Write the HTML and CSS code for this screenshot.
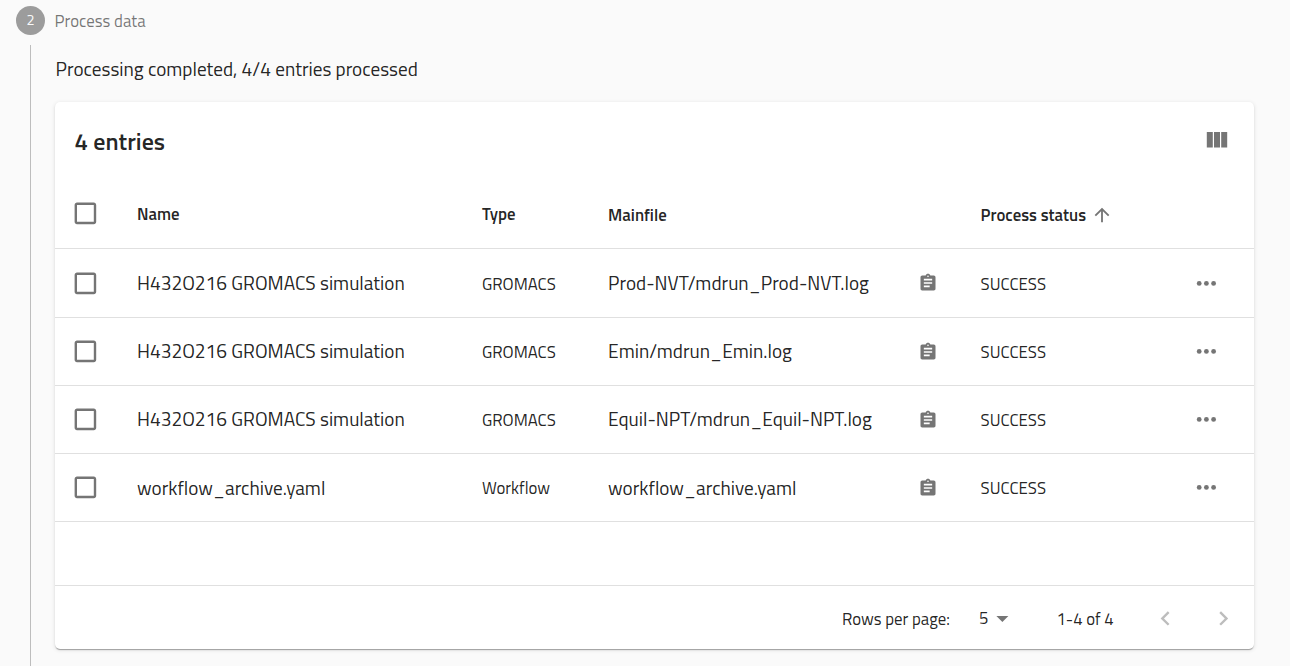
FILE: index.html
```
<!DOCTYPE html>
<html lang="en">
<head>
<meta charset="utf-8">
<title>Process data</title>
<link rel="stylesheet" href="styles.css">
</head>
<body>
<svg class="defs" aria-hidden="true">
  <symbol id="box" viewBox="0 0 24 24"><path d="M19 5v14H5V5h14m0-2H5c-1.1 0-2 .9-2 2v14c0 1.100.9 2 2 2h14c1.100 0 2-.9 2-2V5c0-1.100-.9-2-2-2z"/></symbol>
  <symbol id="columns" viewBox="0 0 24 24"><path d="M10 18h5V5h-5v13zm-6 0h5V5H4v13zM16 5v13h5V5h-5z"/></symbol>
  <symbol id="arrow" viewBox="0 0 24 24"><path d="M4 12l1.410 1.410L11 7.830V20h2V7.830l5.580 5.590L20 12l-8-8-8 8z"/></symbol>
  <symbol id="clip" viewBox="0 0 24 24"><path d="M19 3h-4.180C14.400 1.840 13.300 1 12 1c-1.300 0-2.400.84-2.820 2H5c-1.100 0-2 .9-2 2v14c0 1.100.9 2 2 2h14c1.100 0 2-.9 2-2V5c0-1.100-.9-2-2-2zm-7 0c.55 0 1 .45 1 1s-.45 1-1 1-1-.45-1-1 .45-1 1-1zm2 14H7v-2h7v2zm3-4H7v-2h10v2zm0-4H7V7h10v2z"/></symbol>
  <symbol id="more" viewBox="0 0 24 24"><circle cx="6" cy="12" r="2"/><circle cx="12" cy="12" r="2"/><circle cx="18" cy="12" r="2"/></symbol>
  <symbol id="drop" viewBox="0 0 24 24"><path d="M7 10l5 5 5-5z"/></symbol>
  <symbol id="prev" viewBox="0 0 24 24"><path d="M15.410 7.410L14 6l-6 6 6 6 1.410-1.410L10.830 12z"/></symbol>
  <symbol id="next" viewBox="0 0 24 24"><path d="M10 6L8.590 7.410 13.170 12l-4.580 4.590L10 18l6-6z"/></symbol>
</svg>
<div class="step">
  <span class="step-icon">2</span>
  <span class="step-label">Process data</span>
</div>
<div class="step-content">
  <p class="message">Processing completed, 4/4 entries processed</p>
  <section class="card">
    <header class="toolbar">
      <h1 class="title">4 entries</h1>
      <svg class="icon"><use href="#columns"/></svg>
    </header>
    <div class="row head">
      <svg class="icon"><use href="#box"/></svg>
      <span>Name</span>
      <span>Type</span>
      <span class="low">Mainfile</span>
      <span></span>
      <span class="sort"><span class="low">Process status</span><svg class="icon-sort"><use href="#arrow"/></svg></span>
    </div>
    <div class="row">
      <svg class="icon"><use href="#box"/></svg>
      <span class="large">H432O216 GROMACS simulation</span>
      <span class="low">GROMACS</span>
      <span class="large">Prod-NVT/mdrun_Prod-NVT.log</span>
      <svg class="icon-clip"><use href="#clip"/></svg>
      <span class="low">SUCCESS</span>
      <svg class="icon"><use href="#more"/></svg>
    </div>
    <div class="row">
      <svg class="icon"><use href="#box"/></svg>
      <span class="large high">H432O216 GROMACS simulation</span>
      <span>GROMACS</span>
      <span class="large high">Emin/mdrun_Emin.log</span>
      <svg class="icon-clip"><use href="#clip"/></svg>
      <span>SUCCESS</span>
      <svg class="icon"><use href="#more"/></svg>
    </div>
    <div class="row">
      <svg class="icon"><use href="#box"/></svg>
      <span class="large high">H432O216 GROMACS simulation</span>
      <span>GROMACS</span>
      <span class="large high">Equil-NPT/mdrun_Equil-NPT.log</span>
      <svg class="icon-clip"><use href="#clip"/></svg>
      <span>SUCCESS</span>
      <svg class="icon"><use href="#more"/></svg>
    </div>
    <div class="row">
      <svg class="icon"><use href="#box"/></svg>
      <span class="large">workflow_archive.yaml</span>
      <span>Workflow</span>
      <span class="large">workflow_archive.yaml</span>
      <svg class="icon-clip"><use href="#clip"/></svg>
      <span>SUCCESS</span>
      <svg class="icon"><use href="#more"/></svg>
    </div>
    <div class="blank"></div>
    <footer class="pager">
      <span class="per-page low">Rows per page:</span>
      <span class="select">5<svg class="icon"><use href="#drop"/></svg></span>
      <span class="range low">1-4 of 4</span>
      <svg class="icon off"><use href="#prev"/></svg>
      <svg class="icon off"><use href="#next"/></svg>
    </footer>
  </section>
</div>
</body>
</html>
```

FILE: styles.css
```
* { box-sizing: border-box; }
html { overflow: hidden; }
body {
  margin: 0;
  height: 666px;
  overflow: hidden;
  background: #fafafa;
  color: rgba(0, 0, 0, .87);
  font: 400 16.8px/24px "Titillium Web", Roboto, sans-serif;
  white-space: nowrap;
}
.defs { display: none; }
.step { display: flex; align-items: center; height: 45px; padding: 0 16px 4px; gap: 9.600px; }
.step-icon {
  width: 29px; height: 29px;
  border-radius: 50%;
  background: #9c9c9c;
  color: #fafafa;
  font-size: 14.4px; line-height: 29px;
  text-align: center;
}
.step-label { color: rgba(0, 0, 0, .54); }
.step-content { margin-left: 30px; height: 640px; padding-left: 24px; border-left: 1px solid #bdbdbd; }
.message { margin: 0; height: 57px; padding: 12px 0 0 .6px; font-size: 19.2px; }
.card {
  width: 1199px; height: 547px;
  border-radius: 5px;
  background: #fff;
  box-shadow: 0 2px 1px -1px rgba(0, 0, 0, .2), 0 1px 1px rgba(0, 0, 0, .14), 0 1px 4px rgba(0, 0, 0, .12);
}
.toolbar { display: flex; justify-content: space-between; align-items: center; height: 77px; padding: 0 23px 0 19.600px; }
.title { margin: 1px 0 0; font-size: 24px; font-weight: 600; line-height: 28px; }
.icon { display: block; flex: none; width: 28.8px; height: 28.8px; fill: #757575; }
.row {
  display: grid;
  grid-template-columns: 66.400px 344.900px 126.200px 309.500px 63px 211.500px 28.800px;
  align-items: center;
  height: 68px;
  padding-left: 15.600px;
  border-bottom: 1px solid #e0e0e0;
}
.head { height: 70px; font-weight: 600; }
.head + .row { height: 69px; }
.large { font-size: 19.2px; }
.low { padding-top: 1.400px; }
.head .low { padding-top: 2px; }
.high { padding-bottom: 1.400px; }
.sort { display: flex; align-items: center; gap: 4.600px; }
.icon-sort { width: 22px; height: 22px; margin-top: 2px; fill: #757575; }
.icon-clip { width: 20px; height: 20px; fill: #757575; }
.blank { height: 64px; border-bottom: 1px solid #e0e0e0; }
.pager { display: flex; align-items: center; height: 64px; padding-left: 787px; }
.per-page { flex: none; width: 137px; }
.select { display: flex; flex: none; align-items: center; width: 77.400px; }
.range { flex: none; width: 94.200px; }
.pager .off { fill: #bdbdbd; margin-right: 29.200px; }
```
